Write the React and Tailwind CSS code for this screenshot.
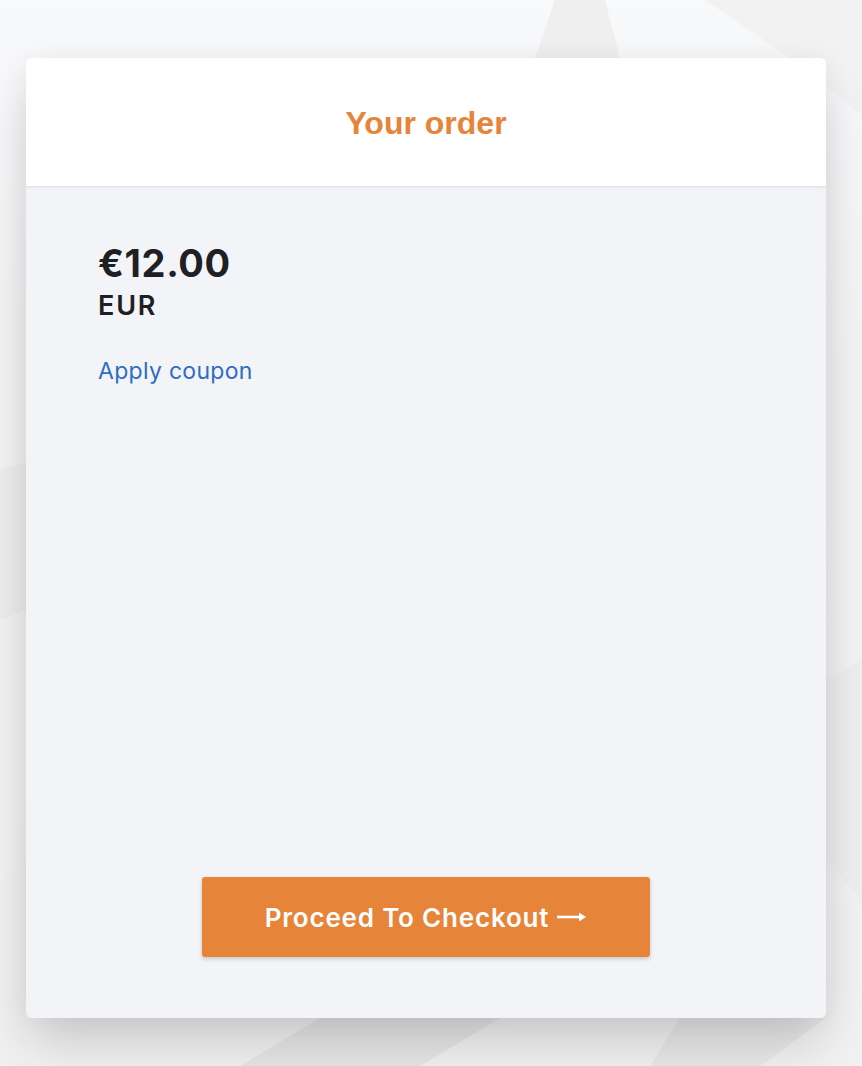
import React from "react";

function Backdrop() {
  return (
    <svg
      className="absolute inset-0 h-full w-full"
      viewBox="0 0 862 1066"
      preserveAspectRatio="none"
      aria-hidden="true"
    >
      <defs>
        <linearGradient id="topfade" x1="0" y1="0" x2="0" y2="1">
          <stop offset="0" stopColor="#f8f9fb" />
          <stop offset="0.3" stopColor="#f3f3f4" />
          <stop offset="1" stopColor="#f1f1f1" />
        </linearGradient>
      </defs>
      <rect width="862" height="1066" fill="url(#topfade)" />
      <polygon points="555,0 605,0 620,58 535,58" fill="#efefef" />
      <polygon points="705,0 862,0 862,115 790,58" fill="#f2f2f2" />
      <polygon points="0,470 26,462 26,610 0,620" fill="#ededed" />
      <polygon points="826,680 862,660 862,900 826,860" fill="#eeeeee" />
      <polygon points="0,880 26,860 26,1066 0,1066" fill="#f0f0f0" />
      <polygon points="240,1066 320,1018 500,1018 420,1066" fill="#e6e6e6" />
      <polygon points="650,1066 680,1018 826,1018 760,1066" fill="#e8e8e8" />
    </svg>
  );
}

export default function App() {
  return (
    <div className="relative min-h-screen w-full overflow-hidden bg-[#f3f3f4]">
      <Backdrop />
      <div className="relative px-[26px] pt-[58px] pb-[48px]">
        <div className="flex h-[960px] w-[800px] flex-col overflow-hidden rounded-[6px] bg-[#f3f4f8] shadow-[0_30px_50px_-5px_rgba(0,0,0,0.16),0_0_30px_rgba(0,0,0,0.05)]">
          <div className="flex h-[129px] shrink-0 items-center justify-center border-b border-[#e1e3ea] bg-white shadow-[0_1px_3px_rgba(0,0,0,0.05)]">
            <h1
              className="pt-[2px] text-[32px] font-bold text-[#e6843a]"
              style={{ fontFamily: '"Liberation Sans", Arial, sans-serif' }}
            >
              Your order
            </h1>
          </div>
          <div
            className="flex flex-1 flex-col px-[72px] pt-[53px] pb-[61px]"
            style={{ fontFamily: 'Inter, "Noto Sans", sans-serif' }}
          >
            <div className="text-[38px] font-bold leading-[46px] tracking-[0.6px] text-[#1f2024]">
              €12.00
            </div>
            <div className="mt-[4px] text-[27px] font-semibold leading-[32px] tracking-[1.8px] text-[#1f2024]">
              EUR
            </div>
            <a
              href="#"
              className="mt-[34px] self-start text-[23px] leading-[30px] tracking-[0.3px] text-[#2f6cc2]"
            >
              Apply coupon
            </a>
            <div className="flex-1" />
            <div className="flex justify-center">
              <button className="flex h-[80px] w-[448px] items-center justify-center gap-[8px] rounded-[3px] bg-[#e6843a] text-[26px] font-semibold tracking-[0.8px] text-white shadow-[0_2px_4px_rgba(0,0,0,0.18)]">
                <span>Proceed To Checkout</span>
                <svg width="30" height="12" viewBox="0 0 30 12" aria-hidden="true">
                  <path d="M0 6 H24" stroke="white" strokeWidth="2.6" />
                  <path d="M22 1.5 L29 6 L22 10.5 Z" fill="white" />
                </svg>
              </button>
            </div>
          </div>
        </div>
      </div>
    </div>
  );
}
